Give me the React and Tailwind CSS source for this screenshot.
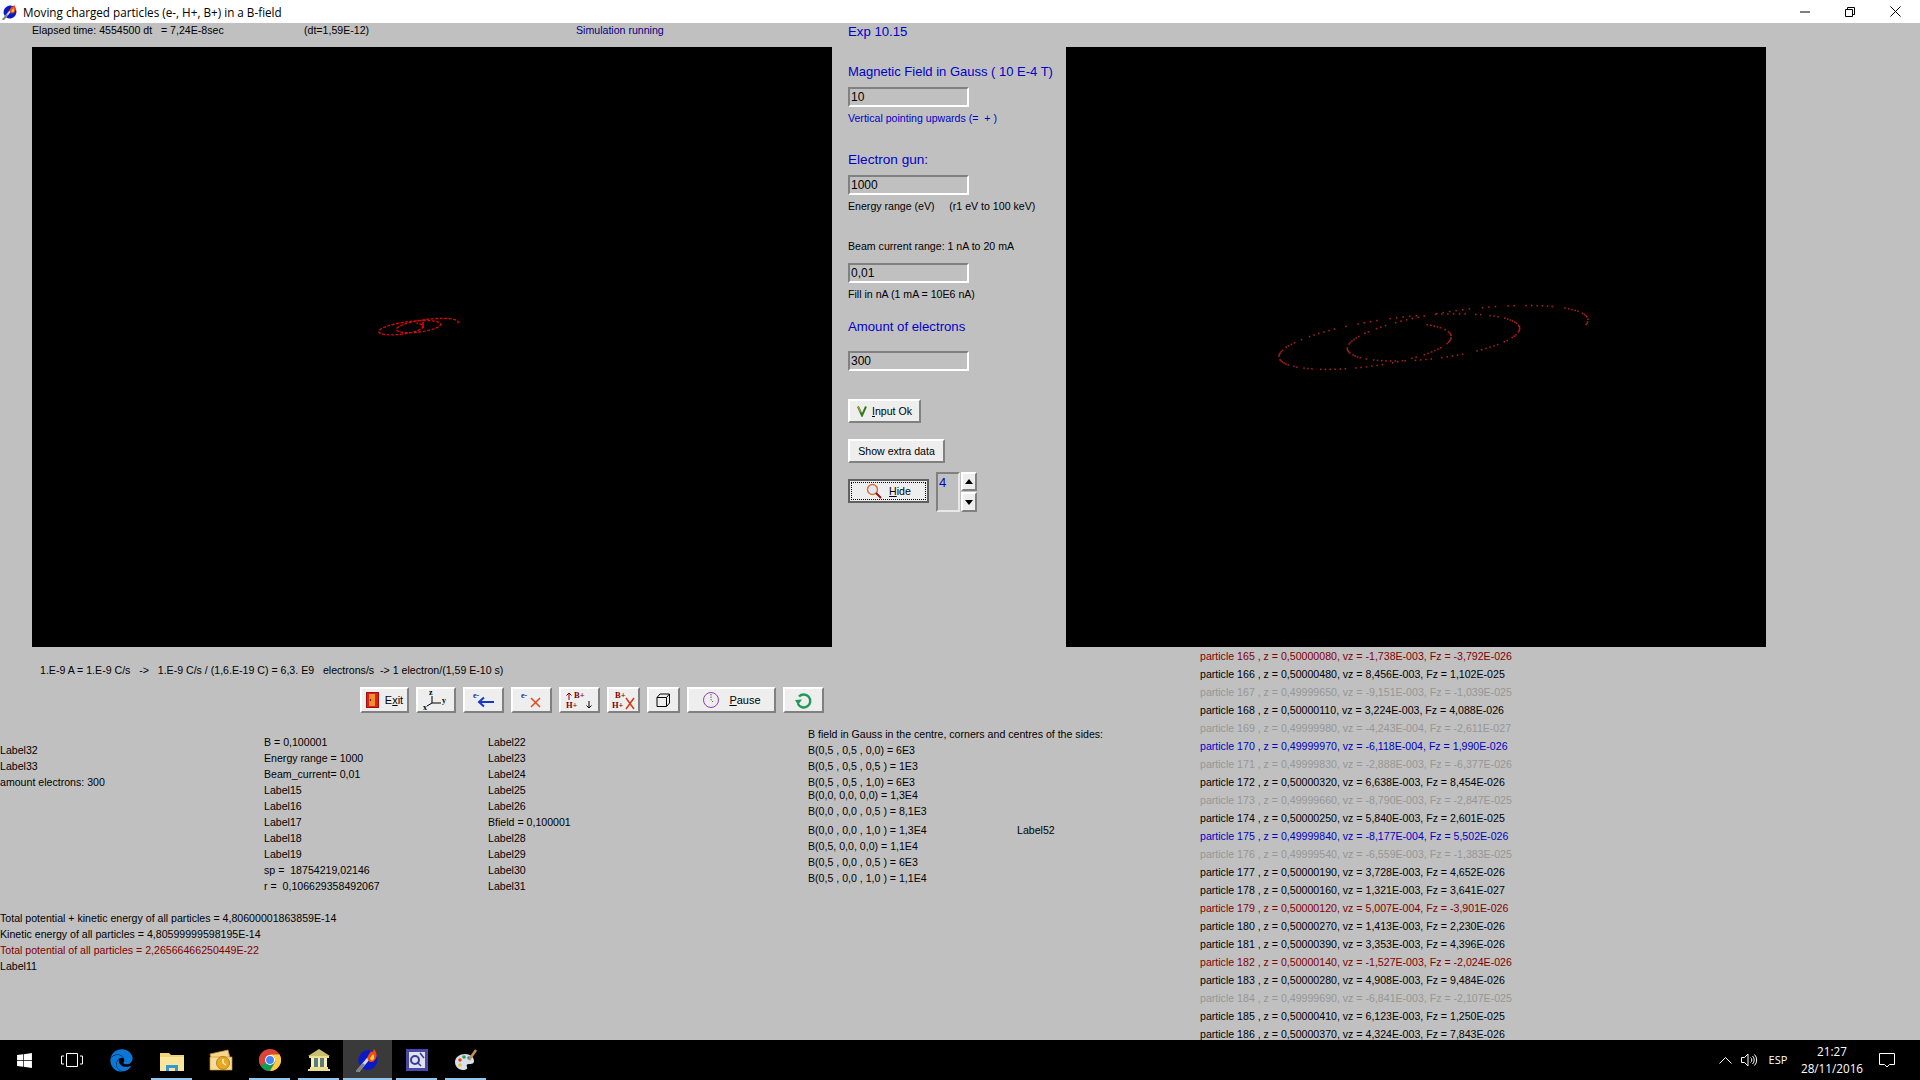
import React from "react";
import { FaEdge, FaWindows } from "react-icons/fa";

const particles = [
  ["165", "0,50000080", "-1,738E-003", "-3,792E-026", "r"],
  ["166", "0,50000480", "8,456E-003", "1,102E-025", "k"],
  ["167", "0,49999650", "-9,151E-003", "-1,039E-025", "g"],
  ["168", "0,50000110", "3,224E-003", "4,088E-026", "k"],
  ["169", "0,49999980", "-4,243E-004", "-2,611E-027", "g"],
  ["170", "0,49999970", "-6,118E-004", "1,990E-026", "b"],
  ["171", "0,49999830", "-2,888E-003", "-6,377E-026", "g"],
  ["172", "0,50000320", "6,638E-003", "8,454E-026", "k"],
  ["173", "0,49999660", "-8,790E-003", "-2,847E-025", "g"],
  ["174", "0,50000250", "5,840E-003", "2,601E-025", "k"],
  ["175", "0,49999840", "-8,177E-004", "5,502E-026", "b"],
  ["176", "0,49999540", "-6,559E-003", "-1,383E-025", "g"],
  ["177", "0,50000190", "3,728E-003", "4,652E-026", "k"],
  ["178", "0,50000160", "1,321E-003", "3,641E-027", "k"],
  ["179", "0,50000120", "5,007E-004", "-3,901E-026", "r"],
  ["180", "0,50000270", "1,413E-003", "2,230E-026", "k"],
  ["181", "0,50000390", "3,353E-003", "4,396E-026", "k"],
  ["182", "0,50000140", "-1,527E-003", "-2,024E-026", "r"],
  ["183", "0,50000280", "4,908E-003", "9,484E-026", "k"],
  ["184", "0,49999690", "-6,841E-003", "-2,107E-025", "g"],
  ["185", "0,50000410", "6,123E-003", "1,250E-025", "k"],
  ["186", "0,50000370", "4,324E-003", "7,843E-026", "k"],
];
const toneClass = { r: "text-[#800000]", k: "text-black", g: "text-[#969696]", b: "text-[#0000c0]" };

// Trajectory of the particle, in a unit where the right picture is 3x enlarged
function orbit(step) {
  const pts = [];
  for (let t = -0.3; t <= 13.2; t += step) {
    const turn = t / (2 * Math.PI);
    const x = 672 - 205 * turn + 308 * Math.cos(t);
    const y = 117 + 25 * turn - 68 * Math.sin(t) - 36 * Math.cos(t);
    pts.push([x, y]);
  }
  return pts;
}
const bigDots = orbit(0.058).filter((_, i) => i % 7 !== 3 && i % 11 !== 5);
const smallLine = orbit(0.04)
  .map(([x, y]) => `${(346 + (x - 45) * 0.0856).toFixed(1)},${(271 + (y - 40) * 0.086).toFixed(1)}`)
  .join(" ");

const Well = ({ children }) => (
  <div className="h-[20px] w-[121px] border-2 border-t-[#808080] border-l-[#808080] border-r-white border-b-white pl-[1px] text-[12px] leading-[16px] text-black">
    {children}
  </div>
);

const raised = "border-2 border-t-white border-l-white border-r-[#808080] border-b-[#808080] bg-[#eeeeee]";

const ToolButton = ({ w, children }) => (
  <div className={`${raised} ${w} flex h-[26px] items-center justify-center gap-[6px] text-[11px] text-black`}>{children}</div>
);

const Ser = ({ x, y, s = 8, c = "#000", children }) => (
  <text x={x} y={y} fontSize={s} fontWeight="700" fontFamily="'Liberation Serif', serif" fill={c}>
    {children}
  </text>
);

const Torch = ({ size }) => (
  <svg width={size} height={size} viewBox="0 0 24 24">
    <ellipse cx="12" cy="12" rx="9.5" ry="10" fill="#0b1ac8" transform="rotate(30 12 12)" />
    <path d="M2 23 L12 11" stroke="#d8d8d8" strokeWidth="3" strokeLinecap="round" />
    <path d="M2 23 L7 17" stroke="#808080" strokeWidth="3" strokeLinecap="round" />
    <path d="M12 12 C10 8 14 6 15 3 C16 5 17 4 18 1 C21 5 22 9 18 13 C16 15 13 14 12 12Z" fill="#f04a10" />
    <path d="M14 11 C14 9 16 8 17 6 C19 9 18 12 16 12.500Z" fill="#ffd23a" />
  </svg>
);

function Slot({ w = "w-[49px]", line, active, children }) {
  return (
    <div className={`relative flex h-full shrink-0 items-center justify-center ${w} ${active ? "bg-[#3a3a3a]" : ""}`}>
      {children}
      {line && <span className={`absolute bottom-0 h-[2px] bg-[#90c8f0] ${active ? "inset-x-0" : "inset-x-[4px]"}`} />}
    </div>
  );
}

export default function App() {
  return (
    <div
      className="flex h-[1080px] w-[1920px] flex-col overflow-hidden bg-[#c0c0c0] text-[10.600px] leading-[16px] whitespace-pre text-black"
      style={{ fontFamily: "'Liberation Sans', Arial, sans-serif" }}
    >
      {/* title bar */}
      <div className="flex h-[23px] shrink-0 items-center bg-white">
        <div className="ml-[2px] flex w-[21px] items-center">
          <Torch size={16} />
        </div>
        <span className="text-[11.700px] text-black" style={{ fontFamily: "'Open Sans', sans-serif" }}>
          Moving charged particles (e-, H+, B+) in a B-field
        </span>
        <div className="ml-auto flex h-full items-center pr-[2px]">
          <div className="flex w-[45px] justify-center">
            <svg width="10" height="10" viewBox="0 0 10 10"><path d="M0 5h10" stroke="#000" /></svg>
          </div>
          <div className="flex w-[45px] justify-center">
            <svg width="10" height="10" viewBox="0 0 10 10"><path d="M.5 2.500h7v7h-7zM2.500 2.500v-2h7v7h-2" fill="none" stroke="#000" /></svg>
          </div>
          <div className="flex w-[46px] justify-center">
            <svg width="11" height="11" viewBox="0 0 11 11"><path d="M.5.5l10 10M10.500.5l-10 10" stroke="#000" /></svg>
          </div>
        </div>
      </div>

      <div className="flex h-[1017px] shrink-0 flex-col overflow-hidden">
        {/* upper part: picture, inputs, picture */}
        <div className="flex h-[624px] shrink-0 pl-[32px]">
          <div className="w-[800px] shrink-0">
            <div className="flex h-[24px] leading-[14px]">
              <span className="w-[272px]">Elapsed time: 4554500 dt   = 7,24E-8sec</span>
              <span className="w-[272px]">(dt=1,59E-12)</span>
              <span className="text-[#000080]">Simulation running</span>
            </div>
            <div className="h-[600px] w-[800px] bg-black">
              <svg className="block h-full w-full" viewBox="0 0 800 600">
                <polyline points={smallLine} fill="none" stroke="#d80a0a" strokeWidth="1.300" strokeDasharray="3 1.500" />
                <path d="M391 275v6" stroke="#ff0000" strokeWidth="1.500" />
              </svg>
            </div>
          </div>

          <div className="w-[234px] shrink-0 pl-[16px]">
            <div className="h-[18px] text-[13.200px] leading-[18px] text-[#0000c8]">Exp 10.15</div>
            <div className="mt-[22px] h-[18px] text-[13px] leading-[18px] text-[#0000c8]">Magnetic Field in Gauss ( 10 E-4 T)</div>
            <div className="mt-[6px]"><Well>10</Well></div>
            <div className="mt-[3px] text-[#0000c8]">Vertical pointing upwards (=  + )</div>
            <div className="mt-[25px] h-[18px] text-[13.600px] leading-[18px] text-[#0000c8]">Electron gun:</div>
            <div className="mt-[6px]"><Well>1000</Well></div>
            <div className="mt-[3px]">Energy range (eV)     (r1 eV to 100 keV)</div>
            <div className="mt-[24px]">Beam current range: 1 nA to 20 mA</div>
            <div className="mt-[9px]"><Well>0,01</Well></div>
            <div className="mt-[3px]">Fill in nA (1 mA = 10E6 nA)</div>
            <div className="mt-[16px] h-[18px] text-[13.200px] leading-[18px] text-[#0000c8]">Amount of electrons</div>
            <div className="mt-[15px]"><Well>300</Well></div>
            <div className={`${raised} mt-[28px] flex h-[24px] w-[73px] items-center justify-center gap-[5px]`}>
              <svg width="10" height="12" viewBox="0 0 10 12"><path d="M1 1.500L5 10.500L9 1.500" fill="none" stroke="#2f7d1f" strokeWidth="2" /><path d="M1 1.500L3.500 7" stroke="#c8a020" strokeWidth="1" /></svg>
              <span><span className="underline">I</span>nput Ok</span>
            </div>
            <div className={`${raised} mt-[16px] flex h-[24px] w-[97px] items-center justify-center`}>Show extra data</div>
            <div className="mt-[9px] flex items-start">
              <div className="mt-[7px] flex h-[24px] w-[81px] items-center justify-center border-2 border-[#606060] bg-[#eeeeee] p-[1px]">
                <div className="flex h-full w-full items-center justify-center gap-[7px] border border-dotted border-black">
                  <svg width="16" height="16" viewBox="0 0 16 16">
                    <circle cx="6.500" cy="6.500" r="5" fill="#dfe8f2" stroke="#d87040" strokeWidth="1.500" />
                    <path d="M10 10l5 5" stroke="#a01010" strokeWidth="2" />
                  </svg>
                  <span><span className="underline">H</span>ide</span>
                </div>
              </div>
              <div className="ml-[7px] h-[40px] w-[24px] border-2 border-t-[#808080] border-l-[#808080] border-r-[#e8e8e8] border-b-[#e8e8e8] pl-[1px] text-[13px] leading-[18px] text-[#0000c8]">4</div>
              <div className="ml-px flex flex-col gap-[1px]">
                <div className={`${raised} flex h-[19px] w-[16px] items-center justify-center`}>
                  <svg width="8" height="5" viewBox="0 0 8 5"><path d="M4 0l4 5H0z" fill="#000" /></svg>
                </div>
                <div className={`${raised} flex h-[20px] w-[16px] items-center justify-center`}>
                  <svg width="8" height="5" viewBox="0 0 8 5"><path d="M4 5L0 0h8z" fill="#000" /></svg>
                </div>
              </div>
            </div>
          </div>

          <div className="w-[700px] shrink-0 pt-[24px]">
            <div className="h-[600px] w-[700px] bg-black">
              <svg className="block h-full w-full" viewBox="0 0 700 600">
                {bigDots.map(([x, y], i) => (
                  <rect key={i} x={(194 + x / 3).toFixed(1)} y={(243 + y / 3).toFixed(1)} width="1.500" height="1.500" fill="#b82020" />
                ))}
              </svg>
            </div>
          </div>
        </div>

        {/* lower part */}
        <div className="flex min-h-0 flex-1">
          <div className="w-[1200px] shrink-0">
            <div className="pt-[15px] pl-[40px]">1.E-9 A = 1.E-9 C/s   -&gt;   1.E-9 C/s / (1,6.E-19 C) = 6,3. E9   electrons/s  -&gt; 1 electron/(1,59 E-10 s)</div>
            <div className="mt-[9px] flex gap-[7px] pl-[360px]">
              <ToolButton w="w-[49px]">
                <svg width="13" height="16" viewBox="0 0 13 16">
                  <rect x="0.500" y="0.500" width="12" height="15" fill="#e02010" stroke="#a01010" />
                  <rect x="3" y="2" width="6" height="12" fill="#f09030" />
                  <circle cx="4.500" cy="8" r="0.800" fill="#000" />
                </svg>
                <span>E<span className="underline">x</span>it</span>
              </ToolButton>
              <ToolButton w="w-[40px]">
                <svg width="28" height="22" viewBox="0 0 28 22">
                  <path d="M10 7v7H19M10 14L5 17" fill="none" stroke="#000" />
                  <Ser x="7" y="6">z</Ser>
                  <Ser x="20" y="14">y</Ser>
                  <Ser x="1" y="21">x</Ser>
                </svg>
              </ToolButton>
              <ToolButton w="w-[41px]">
                <svg width="22" height="20" viewBox="0 0 22 20">
                  <Ser x="0" y="8" c="#2030a0">e-</Ser>
                  <path d="M21 12H6M11 7.500L6 12l5 4.500" fill="none" stroke="#1838c8" strokeWidth="2" />
                </svg>
              </ToolButton>
              <ToolButton w="w-[41px]">
                <svg width="22" height="20" viewBox="0 0 22 20">
                  <Ser x="0" y="8" c="#2030a0">e-</Ser>
                  <path d="M10 8l9 9M19 8l-9 9" stroke="#e84818" strokeWidth="1.500" />
                </svg>
              </ToolButton>
              <ToolButton w="w-[41px]">
                <svg width="30" height="20" viewBox="0 0 30 20">
                  <path d="M4 10V3M1.500 5.500L4 3l2.500 2.500" fill="none" stroke="#800000" strokeWidth="1" />
                  <Ser x="9" y="8" s="8.500" c="#800000">B+</Ser>
                  <Ser x="1" y="18" s="8.500" c="#800000">H+</Ser>
                  <path d="M24 11v7M21.500 15.500L24 18l2.500-2.500" fill="none" stroke="#000" strokeWidth="1" />
                </svg>
              </ToolButton>
              <ToolButton w="w-[33px]">
                <svg width="24" height="20" viewBox="0 0 24 20">
                  <Ser x="3" y="8" s="8.500" c="#800000">B+</Ser>
                  <Ser x="0" y="18" s="8.500" c="#800000">H+</Ser>
                  <path d="M14 8l8 11M22 8l-8 11" stroke="#e03010" strokeWidth="1.400" />
                </svg>
              </ToolButton>
              <ToolButton w="w-[33px]">
                <svg width="15" height="15" viewBox="0 0 15 15">
                  <path d="M1 4.500h9.500v9H1zM1 4.500l3-3.500h9.500v9l-3 3.500M10.500 4.500l3-3.500" fill="none" stroke="#000" />
                </svg>
              </ToolButton>
              <ToolButton w="w-[89px]">
                <svg width="18" height="18" viewBox="0 0 18 18">
                  <circle cx="9" cy="9" r="7.500" fill="none" stroke="#9040b0" />
                  <path d="M9 3v6l2 2" fill="none" stroke="#606060" strokeDasharray="1.500 1" />
                </svg>
                <span className="ml-[3px]"><span className="underline">P</span>ause</span>
              </ToolButton>
              <ToolButton w="w-[41px]">
                <svg width="19" height="19" viewBox="0 0 19 19">
                  <path d="M5 5.500A6.500 6.500 0 1 1 4 13" fill="none" stroke="#1e9a5a" strokeWidth="2.400" />
                  <path d="M1 9l7-.500-4 5.500z" fill="#1e9a5a" />
                </svg>
              </ToolButton>
            </div>

            <div className="mt-[13px] flex">
              <div className="w-[808px] shrink-0">
                <div className="flex">
                  <div className="w-[264px] shrink-0 pt-[16px]">
                    <div>Label32</div>
                    <div>Label33</div>
                    <div>amount electrons: 300</div>
                  </div>
                  <div className="w-[224px] shrink-0 pt-[8px]">
                    {["B = 0,100001", "Energy range = 1000", "Beam_current= 0,01", "Label15", "Label16", "Label17", "Label18", "Label19", "sp =  18754219,02146", "r =  0,106629358492067"].map((t) => (
                      <div key={t}>{t}</div>
                    ))}
                  </div>
                  <div className="pt-[8px]">
                    {["Label22", "Label23", "Label24", "Label25", "Label26", "Bfield = 0,100001", "Label28", "Label29", "Label30", "Label31"].map((t) => (
                      <div key={t}>{t}</div>
                    ))}
                  </div>
                </div>
                <div className="mt-[16px]">
                  <div>Total potential + kinetic energy of all particles = 4,80600001863859E-14</div>
                  <div>Kinetic energy of all particles = 4,80599999598195E-14</div>
                  <div className="text-[#800000]">Total potential of all particles = 2,26566466250449E-22</div>
                  <div>Label11</div>
                </div>
              </div>
              <div className="flex-1">
                <div>B field in Gauss in the centre, corners and centres of the sides:</div>
                <div>B(0,5 , 0,5 , 0,0) = 6E3</div>
                <div>B(0,5 , 0,5 , 0,5 ) = 1E3</div>
                <div>B(0,5 , 0,5 , 1,0) = 6E3</div>
                <div className="mt-[-3px]">B(0,0, 0,0, 0,0) = 1,3E4</div>
                <div>B(0,0 , 0,0 , 0,5 ) = 8,1E3</div>
                <div className="mt-[3px] flex">
                  <span className="w-[209px] shrink-0">B(0,0 , 0,0 , 1,0 ) = 1,3E4</span>
                  <span>Label52</span>
                </div>
                <div>B(0,5, 0,0, 0,0) = 1,1E4</div>
                <div>B(0,5 , 0,0 , 0,5 ) = 6E3</div>
                <div>B(0,5 , 0,0 , 1,0 ) = 1,1E4</div>
              </div>
            </div>
          </div>

          <div className="flex-1">
            {particles.map(([n, z, v, f, tone]) => (
              <div key={n} className={`h-[18px] leading-[18px] ${toneClass[tone]}`}>
                {`particle ${n} , z = ${z}, vz = ${v}, Fz = ${f}`}
              </div>
            ))}
          </div>
        </div>
      </div>

      {/* task bar */}
      <div className="flex h-[40px] shrink-0 items-center bg-black text-white" style={{ fontFamily: "'Open Sans', sans-serif" }}>
        <Slot w="w-[48px]"><FaWindows size={17} color="#ffffff" /></Slot>
        <Slot w="w-[48px]">
          <svg width="22" height="14" viewBox="0 0 22 14"><path d="M5.500.5h11v13h-11zM3 3H.5v8H3M19 3h2.500v8H19" fill="none" stroke="#fff" /></svg>
        </Slot>
        <Slot w="w-[51px]"><FaEdge size={23} color="#0a78d7" /></Slot>
        <Slot line>
          <svg width="24" height="21" viewBox="0 0 24 21">
            <path d="M0 3h9l2 2h13v16H0z" fill="#f3d37a" />
            <path d="M0 7h24v14H0z" fill="#fbe59a" />
            <path d="M6 21v-6h12v6h-3v-3H9v3z" fill="#2f9ad8" />
          </svg>
        </Slot>
        <Slot>
          <svg width="24" height="22" viewBox="0 0 24 22">
            <path d="M1 5l18-4 2 8L3 14z" fill="#f5d68a" stroke="#c89030" strokeWidth="0.700" />
            <path d="M1 8h22v13H1z" fill="#f7dd9c" stroke="#c89030" strokeWidth="0.700" />
            <circle cx="14" cy="14" r="6.500" fill="#e9a820" stroke="#9a6a10" strokeWidth="0.700" />
            <path d="M14 10v4l3 2" fill="none" stroke="#fff3c8" strokeWidth="1.400" />
          </svg>
        </Slot>
        <Slot line>
          <svg width="22" height="22" viewBox="0 0 24 24">
            <circle cx="12" cy="12" r="12" fill="#db4437" />
            <path d="M12 12L1.600 18A12 12 0 0 0 12 24L18 13.500z" fill="#0f9d58" />
            <path d="M12 6H22.400A12 12 0 0 1 12 24L18 13.500z" fill="#ffcd40" />
            <path d="M12 6H1.600A12 12 0 0 0 1.600 18L7 9z" fill="#db4437" />
            <circle cx="12" cy="12" r="5.500" fill="#fff" />
            <circle cx="12" cy="12" r="4.300" fill="#4285f4" />
          </svg>
        </Slot>
        <Slot line>
          <svg width="24" height="24" viewBox="0 0 24 24">
            <path d="M12 1L23 8H1z" fill="#c8c070" />
            <path d="M2 8h20v2H2zM1 21h22v2H1zM3 19h18v2H3z" fill="#e8e090" />
            <path d="M4 10h3v9H4zM10.500 10h3v9h-3zM17 10h3v9h-3z" fill="#f6f2b0" />
            <path d="M7 10h3.500v9H7zM13.500 10H17v9h-3.500z" fill="#5c7a88" />
          </svg>
        </Slot>
        <Slot line active><Torch size={24} /></Slot>
        <Slot line>
          <svg width="22" height="22" viewBox="0 0 22 22">
            <rect width="22" height="22" fill="#4848a8" />
            <rect x="3" y="3" width="16" height="16" fill="#dfe0f0" />
            <circle cx="9" cy="11" r="4" fill="none" stroke="#3a3a98" strokeWidth="2" />
            <path d="M11 13l4 4M14 4l4 5" stroke="#3a3a98" strokeWidth="1.500" />
          </svg>
        </Slot>
        <Slot line>
          <svg width="24" height="24" viewBox="0 0 24 24">
            <path d="M1 14c0-5 5-8 10-8s9 3 9 7c0 3-3 3-5 3s-3 1-2 3c1 2-1 3-4 3-5 0-8-4-8-8z" fill="#d8e0e8" />
            <circle cx="6" cy="12" r="1.800" fill="#e84030" />
            <circle cx="10" cy="9" r="1.800" fill="#30a040" />
            <circle cx="15" cy="10" r="1.800" fill="#3070e0" />
            <circle cx="6" cy="17" r="1.800" fill="#e8c030" />
            <path d="M15 12L22 2" stroke="#c89050" strokeWidth="2.500" />
          </svg>
        </Slot>

        <div className="ml-auto flex h-full items-center pr-[15px]">
          <div className="flex w-[24px] justify-center">
            <svg width="13" height="8" viewBox="0 0 13 8"><path d="M.5 7.500l6-6 6 6" fill="none" stroke="#fff" /></svg>
          </div>
          <div className="flex w-[24px] justify-center">
            <svg width="17" height="14" viewBox="0 0 17 14">
              <path d="M.5 4.500h3L7 1v12L3.500 9.500h-3z" fill="none" stroke="#fff" />
              <path d="M9.500 4.500a3 3 0 0 1 0 5M11.500 3a5.500 5.500 0 0 1 0 8M13.500 1.500a8 8 0 0 1 0 11" fill="none" stroke="#fff" />
            </svg>
          </div>
          <div className="w-[34px] text-center text-[11px]">ESP</div>
          <div className="flex w-[74px] flex-col items-center text-[11.700px] leading-[17px]">
            <span>21:27</span>
            <span>28/11/2016</span>
          </div>
          <div className="flex w-[36px] justify-center">
            <svg width="16" height="15" viewBox="0 0 16 15"><path d="M.5.5h15v11h-5l-2.500 2.500L5.500 11.500h-5z" fill="none" stroke="#fff" /></svg>
          </div>
        </div>
      </div>
    </div>
  );
}
